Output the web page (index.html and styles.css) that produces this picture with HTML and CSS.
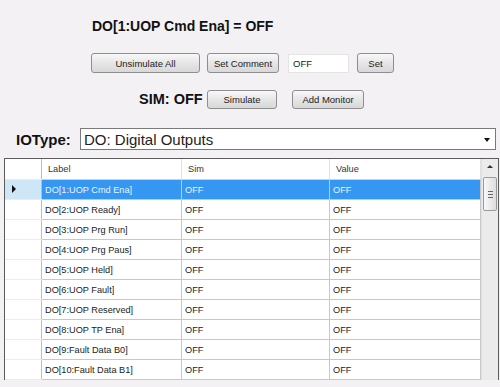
FILE: index.html
```html
<!DOCTYPE html>
<html lang="en">
  <head>
    <link rel="stylesheet" href="styles.css">
    <meta charset="UTF-8" />
    <title>IO Simulator</title>
  </head>
  <body>
    <div class="panel">
      <h1 class="title">DO[1:UOP Cmd Ena] = OFF</h1>
      <div class="row row-one">
        <button type="button" class="btn btn-unsim">Unsimulate All</button>
        <button type="button" class="btn btn-comment">Set Comment</button>
        <input type="text" class="value-input" value="OFF" />
        <button type="button" class="btn btn-set">Set</button>
      </div>
      <div class="row row-two">
        <span class="sim-state">SIM: OFF</span>
        <button type="button" class="btn btn-simulate">Simulate</button>
        <button type="button" class="btn btn-monitor">Add Monitor</button>
      </div>
      <div class="row row-type">
        <label class="type-label" for="io-type">IOType:</label>
        <div class="select-box" id="io-type">
          <span>DO: Digital Outputs</span>
          <span class="select-arrow"></span>
        </div>
      </div>
    </div>

    <div class="grid-wrap">
      <table class="grid">
        <thead>
          <tr>
            <th class="rh"></th>
            <th class="c-label">Label</th>
            <th class="c-sim">Sim</th>
            <th class="c-value">Value</th>
          </tr>
        </thead>
        <tbody id="grid-body"></tbody>
      </table>
      <div class="scrollbar">
        <span class="scroll-up"></span>
        <div class="scroll-thumb"><span></span><span></span><span></span></div>
      </div>
    </div>

    <script>
      const io_rows = [
        "DO[1:UOP Cmd Ena]",
        "DO[2:UOP Ready]",
        "DO[3:UOP Prg Run]",
        "DO[4:UOP Prg Paus]",
        "DO[5:UOP Held]",
        "DO[6:UOP Fault]",
        "DO[7:UOP Reserved]",
        "DO[8:UOP TP Ena]",
        "DO[9:Fault Data B0]",
        "DO[10:Fault Data B1]",
      ];

      const body = document.getElementById("grid-body");
      io_rows.forEach((label, i) => {
        let tr = document.createElement("tr");
        if (i === 0) tr.className = "selected";
        tr.innerHTML = `<td class="rh">${i === 0 ? '<span class="pointer"></span>' : ""}</td>
                        <td>${label}</td><td>OFF</td><td>OFF</td>`;
        body.appendChild(tr);
      });
    </script>
  </body>
</html>
```

FILE: styles.css
```css
body {
  margin: 0;
  background-color: #f4f1f4;
  font-family: "Liberation Sans", Arial, sans-serif;
  color: #111;
}
.panel {
  padding-top: 18px;
}
.title {
  margin: 0 0 0 92px;
  font-size: 14px;
  line-height: 16px;
  font-weight: bold;
}
.row {
  display: flex;
  align-items: center;
}
.row-one {
  margin-top: 19px;
  padding-left: 91px;
  height: 20px;
}
.row-two {
  margin-top: 16px;
  padding-left: 139px;
  height: 20px;
}
.row-type {
  margin-top: 19px;
  padding-left: 16px;
  height: 22px;
}
.btn {
  height: 20px;
  padding: 0;
  border: 1px solid #8e8e8e;
  border-radius: 3px;
  background: linear-gradient(#f8f8f8, #e6e6e6 50%, #d8d8d8);
  font-family: "Liberation Sans", Arial, sans-serif;
  font-size: 9.5px;
  color: #222;
}
.btn-unsim { width: 109px; }
.btn-comment { width: 72px; margin-left: 7px; }
.value-input {
  box-sizing: border-box;
  width: 61px;
  height: 19px;
  margin-left: 9px;
  padding: 0 4px;
  border: 1px solid #e4e4e4;
  background: #fff;
  font-family: "Liberation Sans", Arial, sans-serif;
  font-size: 9.5px;
  color: #222;
}
.btn-set { width: 37px; margin-left: 8px; }
.sim-state {
  width: 68px;
  font-size: 14.5px;
  font-weight: bold;
}
.btn-simulate { width: 70px; height: 19px; }
.btn-monitor { width: 72px; height: 19px; margin-left: 15px; }
.type-label {
  width: 64px;
  font-size: 15px;
  font-weight: bold;
}
.select-box {
  box-sizing: border-box;
  display: flex;
  align-items: center;
  justify-content: space-between;
  width: 416px;
  height: 22px;
  padding: 0 0 0 3px;
  border: 1px solid #7a7a7a;
  background: #fff;
  font-size: 15px;
  color: #222;
}
.select-arrow {
  width: 14px;
  height: 18px;
  margin-right: 1px;
  position: relative;
}
.select-arrow::after {
  content: "";
  position: absolute;
  left: 4px;
  top: 8px;
  border-left: 3px solid transparent;
  border-right: 3px solid transparent;
  border-top: 4px solid #111;
}
.grid-wrap {
  display: flex;
  margin: 8px 0 0 4px;
  width: 493px;
  border: 1px solid #5c5c5c;
  border-bottom: none;
  background: #fff;
}
.grid {
  width: 476px;
  border-collapse: collapse;
  table-layout: fixed;
  font-size: 9.2px;
  color: #222;
}
.grid th {
  height: 20px;
  padding: 0 0 0 6px;
  text-align: left;
  font-weight: normal;
  color: #333;
  border-right: 1px solid #e2e2e2;
  border-bottom: 1px solid #cfcfcf;
}
.grid td {
  height: 19px;
  padding: 0 0 0 3px;
  white-space: nowrap;
  border-right: 1px solid #c8c8c8;
  border-bottom: 1px solid #c8c8c8;
}
.grid .rh {
  width: 30px;
  border-right: 1px solid #bdbdbd;
  border-bottom: 1px solid #ececec;
}
.grid th.rh {
  border-bottom: 1px solid #ececec;
}
.c-label { width: 133px; }
.c-sim { width: 141px; }
.grid tr.selected td {
  background: #3597f2;
  color: #e8f4ff;
}
.grid tr.selected td.rh {
  background: #cfe6f7;
}
.pointer {
  display: inline-block;
  margin-left: 4px;
  border-top: 4px solid transparent;
  border-bottom: 4px solid transparent;
  border-left: 4px solid #111;
}
.scrollbar {
  width: 16px;
  background: #ebebeb;
  border-left: 1px solid #e0e0e0;
}
.scroll-up {
  display: block;
  width: 0;
  margin: 6px 0 0 5px;
  border-left: 3px solid transparent;
  border-right: 3px solid transparent;
  border-bottom: 3px solid #333;
}
.scroll-thumb {
  display: flex;
  flex-direction: column;
  align-items: center;
  justify-content: center;
  gap: 2px;
  width: 12px;
  height: 32px;
  margin: 9px 0 0 1px;
  border: 1px solid #9a9a9a;
  border-radius: 2px;
  background: linear-gradient(90deg, #f7f7f7, #dedede);
}
.scroll-thumb span {
  width: 5px;
  height: 1px;
  background: #666;
}
```
